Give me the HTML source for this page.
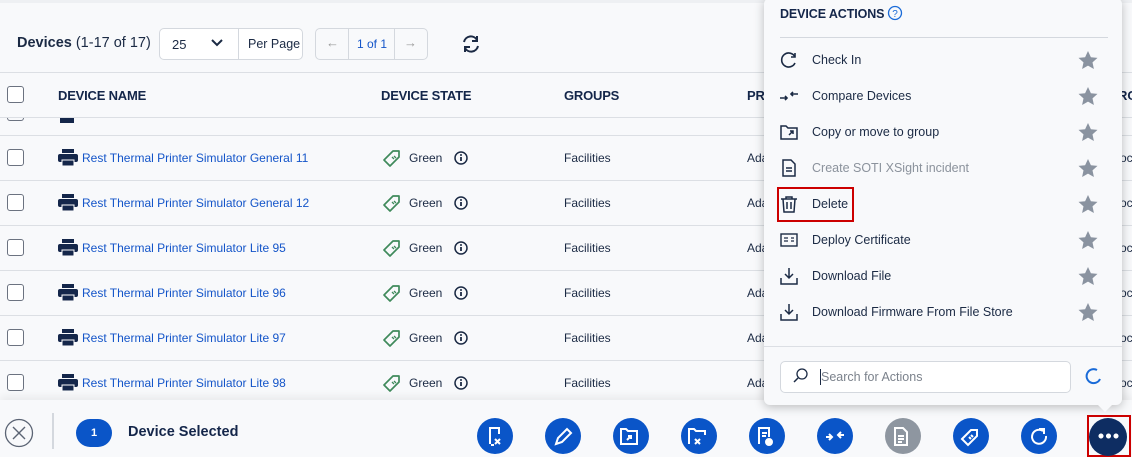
<!DOCTYPE html>
<html><head><style>
*{box-sizing:border-box;margin:0;padding:0}
body{width:1132px;height:457px;overflow:hidden;background:#f8f9fb;font-family:"Liberation Sans",sans-serif;position:relative;color:#1b2a44}
.abs{position:absolute}
.hdr{font-size:13px;font-weight:bold;color:#14264a;letter-spacing:-.2px}
.cb{position:absolute;left:7px;width:17px;height:17px;border:1.5px solid #6b7280;border-radius:3px;background:#fff}
.line{position:absolute;left:0;width:1132px;height:1px;background:#dcdfe4}
.row{position:absolute;left:0;width:1132px;height:45px;font-size:12px}
.row .nm{position:absolute;left:82px;top:16px;color:#1455c9}
.row .st{position:absolute;left:409px;top:16px}
.row .gr{position:absolute;left:564px;top:16px}
.row .pr{position:absolute;left:747px;top:16px}
.row .ro{position:absolute;left:1120px;top:16px}
.pop{position:absolute;left:764px;top:-2px;width:358px;height:407px;background:#f8f9fb;border-radius:6px;box-shadow:0 2px 10px rgba(0,0,0,.25)}
.it{position:absolute;left:16px;height:36px;width:330px;font-size:12.5px;color:#1b2a44}
.it span{position:absolute;left:32px;top:11px}
.it svg.ic{position:absolute;left:0;top:9px}
.bb{position:absolute;top:418px;width:36px;height:36px;border-radius:50%;background:#0a55c8}
</style></head><body>
<div class="abs" style="left:0;top:0;width:1132px;height:3px;background:#eef0f3"></div>
<div class="abs" style="left:17px;top:35px;font-size:14.5px"><b>Devices</b> (1-17 of 17)</div>
<div class="abs" style="left:159px;top:28px;width:144px;height:32px;border:1px solid #d4d8de;border-radius:5px;background:#fff"></div>
<div class="abs" style="left:238px;top:29px;width:1px;height:30px;background:#d4d8de"></div>
<div class="abs" style="left:172px;top:37px;font-size:13px">25</div>
<svg class="abs" style="left:211px;top:38px" width="12" height="10"><path d="M1 2l5 5 5-5" stroke="#1b2a44" stroke-width="2" fill="none"/></svg>
<div class="abs" style="left:248px;top:37px;font-size:12.5px">Per Page</div>
<div class="abs" style="left:315px;top:28px;width:113px;height:32px;border:1px solid #d4d8de;border-radius:5px;background:#f8f9fb"></div>
<div class="abs" style="left:348px;top:29px;width:1px;height:30px;background:#d4d8de"></div>
<div class="abs" style="left:394px;top:29px;width:1px;height:30px;background:#d4d8de"></div>
<div class="abs" style="left:326px;top:35px;font-size:13px;color:#999">←</div>
<div class="abs" style="left:357px;top:37px;font-size:12px;color:#1455c9">1 of 1</div>
<div class="abs" style="left:404px;top:35px;font-size:13px;color:#999">→</div>
<svg class="abs" style="left:460px;top:33px" width="22" height="22" viewBox="0 0 22 22"><path d="M4 9a7 7 0 0 1 13-2M18 13a7 7 0 0 1-13 2" stroke="#1b2a44" stroke-width="2" fill="none"/><path d="M17 3v5h-5M5 19v-5h5" stroke="#1b2a44" stroke-width="2" fill="none"/></svg>
<div class="line" style="top:72px"></div>
<div class="cb" style="top:86px"></div>
<div class="abs hdr" style="left:58px;top:88px">DEVICE NAME</div>
<div class="abs hdr" style="left:381px;top:88px">DEVICE STATE</div>
<div class="abs hdr" style="left:564px;top:88px">GROUPS</div>
<div class="abs hdr" style="left:747px;top:88px">PR</div>
<div class="line" style="top:117px"></div>
<div class="line" style="top:135px"></div>
<div class="abs" style="left:60px;top:118px;width:14px;height:5px;background:#14264a"></div>
<div class="abs" style="left:7px;top:118px;width:17px;height:3px;border:1.5px solid #6b7280;border-top:none;border-radius:0 0 3px 3px"></div>

<div id="rows"></div>
<script>
var n=["General 11","General 12","Lite 95","Lite 96","Lite 97","Lite 98"],h="";
for(var i=0;i<6;i++){var t=135+i*45;
h+='<div class="row" style="top:'+t+'px"><div class="cb" style="top:14px"></div>'+
'<svg class="abs" style="left:58px;top:14px" width="20" height="17" viewBox="0 0 20 17"><rect x="4" y="0" width="12" height="4" fill="#14264a"/><rect x="0" y="5" width="20" height="8" rx="2" fill="#14264a"/><rect x="4" y="11" width="12" height="6" fill="#14264a" stroke="#fff" stroke-width="1"/></svg>'+
'<div class="nm">Rest Thermal Printer Simulator '+n[i]+'</div>'+
'<svg class="abs" style="left:382px;top:13px" width="20" height="20" viewBox="0 0 20 20"><path d="M2 12L11 3h6v6l-9 9z" stroke="#3f8a5b" stroke-width="1.7" fill="none" stroke-linejoin="round"/><path d="M10 9l2 2M12 8l2 2" stroke="#3f8a5b" stroke-width="1.3"/></svg>'+
'<div class="st">Green</div>'+
'<svg class="abs" style="left:454px;top:16px" width="14" height="14" viewBox="0 0 14 14"><circle cx="7" cy="7" r="6" stroke="#1b2a44" stroke-width="1.5" fill="none"/><path d="M7 6v4" stroke="#1b2a44" stroke-width="1.8"/><circle cx="7" cy="4" r="1" fill="#1b2a44"/></svg>'+
'<div class="gr">Facilities</div><div class="pr">Ada</div><div class="ro">oc</div></div>'+
'<div class="line" style="top:'+(t+45)+'px"></div>';}
document.getElementById("rows").innerHTML=h;
</script>
<div class="abs" style="left:1118px;top:88px;font-size:13px;font-weight:bold;color:#14264a">RO</div>

<div class="abs" style="left:0;top:400px;width:1132px;height:57px;background:#f8f9fb;box-shadow:0 -4px 8px rgba(0,0,0,.06)"></div>
<svg class="abs" style="left:4px;top:418px" width="30" height="30"><circle cx="15" cy="15" r="13.5" stroke="#5b6474" stroke-width="1.3" fill="none"/><path d="M9 9l12 12M21 9L9 21" stroke="#5b6474" stroke-width="1.4"/></svg>
<div class="abs" style="left:52px;top:413px;width:2px;height:36px;background:#d4d8de"></div>
<div class="abs" style="left:76px;top:419px;width:36px;height:28px;border-radius:14px;background:#0a55c8;color:#fff;font-size:11px;font-weight:bold;text-align:center;line-height:28px">1</div>
<div class="abs" style="left:128px;top:424px;font-size:14.5px;font-weight:bold;color:#14264a">Device Selected</div>

<div class="bb" style="left:477px"></div><div class="bb" style="left:545px"></div><div class="bb" style="left:613px"></div><div class="bb" style="left:681px"></div><div class="bb" style="left:749px"></div><div class="bb" style="left:817px"></div><div class="bb" style="left:885px;background:#8e96a0"></div><div class="bb" style="left:953px"></div><div class="bb" style="left:1021px"></div>
<svg class="abs" style="left:477px;top:418px" width="700" height="36" viewBox="0 0 700 36" fill="none" stroke="#fff" stroke-width="2">
<path d="M13 26V10h9v6M14 27h3M18 21l5 5M23 21l-5 5"/>
<path d="M79 26l2-6 9-9 4 4-9 9z"/>
<path d="M144 26V11h5l2 2h9v13zM150 22l4-4M151 18h3v3"/>
<path d="M212 26V11h5l2 2h9v4M218 21l5 5M223 21l-5 5"/>
<path d="M282 26V10h10v9M285 15h5M285 18h4"/><circle cx="292" cy="24" r="3" fill="#fff"/>
<path d="M349 19h6M352 16l3 3-3 3M367 17h-6M364 14l-3 3 3 3"/>
<path d="M418 10h8l4 4v13h-12zM421 18h6M421 21h6M421 24h4"/>
<path d="M485 21l9-9h6v6l-9 9zM492 19l2 2M494 17l2 2"/>
<path d="M566 13a7 7 0 1 0 3 5M562 11h5v5"/>
</svg>
<div class="abs" style="left:1087px;top:415px;width:44px;height:42px;border:2px solid #c00"></div>
<div class="abs" style="left:1089px;top:418px;width:38px;height:38px;border-radius:50%;background:#0e2d62"></div>
<div class="abs" style="left:1098px;top:433px;width:21px;height:6px;background:radial-gradient(circle at 3px 3px,#fff 2.3px,transparent 2.7px) 0 0/7.5px 6px repeat-x"></div>

<div class="pop">
<div class="abs hdr" style="left:16px;top:9px;font-size:12.5px;letter-spacing:-.1px">DEVICE ACTIONS</div>
<svg class="abs" style="left:123px;top:7px" width="16" height="16"><circle cx="8" cy="8" r="6.5" stroke="#1a6bd8" stroke-width="1.3" fill="none"/><text x="8" y="12" font-size="10" text-anchor="middle" fill="#1a6bd8" font-family="Liberation Sans">?</text></svg>
<div class="abs" style="left:16px;top:39px;width:328px;height:1px;background:#d4d8de"></div>
<div class="it" style="top:44px"><svg class="ic" width="18" height="18" viewBox="0 0 18 18"><path d="M15 6a7 7 0 1 0 0 6" stroke="#1b2a44" stroke-width="1.6" fill="none"/><path d="M15 2v4h-4" stroke="#1b2a44" stroke-width="1.6" fill="none"/></svg><span>Check In</span></div>
<div class="it" style="top:80px"><svg class="ic" width="18" height="18" viewBox="0 0 18 18"><path d="M0 11h7M5 9l2 2-2 2M18 7h-7M13 5l-2 2 2 2" stroke="#1b2a44" stroke-width="1.6" fill="none"/></svg><span>Compare Devices</span></div>
<div class="it" style="top:116px"><svg class="ic" width="18" height="18" viewBox="0 0 18 18"><path d="M1 16V3h5l2 2h9v11zM9 12l4-4M10 8h3v3" stroke="#1b2a44" stroke-width="1.5" fill="none"/></svg><span>Copy or move to group</span></div>
<div class="it" style="top:152px"><svg class="ic" width="18" height="18" viewBox="0 0 18 18"><path d="M3 1h8l4 4v12H3zM6 9h6M6 12h6" stroke="#1b2a44" stroke-width="1.5" fill="none"/></svg><span style="color:#8b929c">Create SOTI XSight incident</span></div>
<div class="it" style="top:188px"><svg class="ic" width="18" height="18" viewBox="0 0 18 18"><path d="M1 4h16M6 4V2h6v2M3 4l1 13h10l1-13M7 7v7M11 7v7" stroke="#1b2a44" stroke-width="1.5" fill="none"/></svg><span>Delete</span></div>
<div class="abs" style="left:13px;top:189px;width:77px;height:35px;border:2px solid #c00"></div>
<div class="it" style="top:224px"><svg class="ic" width="18" height="18" viewBox="0 0 18 18"><rect x="1" y="3" width="16" height="12" stroke="#1b2a44" stroke-width="1.4" fill="none"/><path d="M4 7h4M4 10h4M11 7h3M11 10h3" stroke="#1b2a44" stroke-width="1.3"/></svg><span>Deploy Certificate</span></div>
<div class="it" style="top:260px"><svg class="ic" width="18" height="18" viewBox="0 0 18 18"><path d="M9 1v10M5 7l4 4 4-4M1 11v6h16v-6" stroke="#1b2a44" stroke-width="1.5" fill="none"/></svg><span>Download File</span></div>
<div class="it" style="top:296px"><svg class="ic" width="18" height="18" viewBox="0 0 18 18"><path d="M9 1v10M5 7l4 4 4-4M1 11v6h16v-6" stroke="#1b2a44" stroke-width="1.5" fill="none"/></svg><span>Download Firmware From File Store</span></div>
<div id="stars"></div>
<div class="abs" style="left:0;top:348px;width:358px;height:1px;background:#dcdfe4"></div>
<div class="abs" style="left:16px;top:363px;width:291px;height:32px;border:1px solid #d4d8de;border-radius:5px;background:#fff"></div>
<svg class="abs" style="left:28px;top:370px" width="16" height="16"><circle cx="10" cy="6" r="5" stroke="#1b2a44" stroke-width="1.3" fill="none"/><path d="M6 10l-4 4" stroke="#1b2a44" stroke-width="1.5"/></svg>
<div class="abs" style="left:56px;top:371px;width:1px;height:16px;background:#1b2a44"></div>
<div class="abs" style="left:57px;top:372px;font-size:12.5px;color:#7b828c">Search for Actions</div>
<svg class="abs" style="left:320px;top:369px" width="18" height="18"><path d="M13 3A7 7 0 1 0 16 12" stroke="#1a6bd8" stroke-width="2" fill="none"/></svg>
</div>
<div class="abs" style="left:1097px;top:404px;width:0;height:0;border-left:8px solid transparent;border-right:8px solid transparent;border-top:8px solid #f8f9fb"></div>
<script>
var s="";for(var i=0;i<8;i++)s+='<svg class="abs" style="left:314px;top:'+(53+i*36)+'px" width="20" height="19" viewBox="0 0 20 19"><path d="M10 0l2.9 6.2 6.6.7-5 4.5 1.4 6.6L10 14.6 4.1 18l1.4-6.6-5-4.5 6.6-.7z" fill="#8a93a0"/></svg>';
document.getElementById("stars").innerHTML=s;
</script>
</body></html>
